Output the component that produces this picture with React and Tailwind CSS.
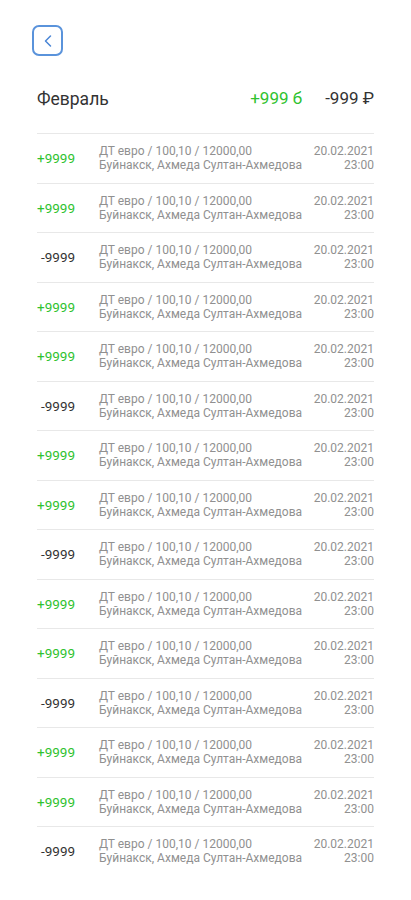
import { ChevronLeft } from "lucide-react";

const rows = [
  "+", "+", "-", "+", "+", "-", "+", "+", "-", "+", "+", "-", "+", "+", "-",
];

const Row = ({ sign }) => {
  const plus = sign === "+";
  return (
    <div className="flex items-center h-[49.5px] border-t border-[#e8e8e8]">
      <div className={`w-[62px] text-[13.5px] ${plus ? "text-[#2fc22f]" : "text-[#333] pl-[4px]"}`}>
        {plus ? "+9999" : "-9999"}
      </div>
      <div className="flex-1 text-[12px] leading-[14px] text-[#909090]">
        <div>ДТ евро / 100,10 / 12000,00</div>
        <div>Буйнакск, Ахмеда Султан-Ахмедова</div>
      </div>
      <div className="text-right text-[12px] leading-[14px] text-[#909090]">
        <div>20.02.2021</div>
        <div>23:00</div>
      </div>
    </div>
  );
};

export default function App() {
  return (
    <div className="min-h-[900px] w-[411px] bg-white pt-[25px] font-['Roboto',sans-serif]">
      <button className="ml-[32px] w-[31px] h-[31px] rounded-[7px] border-2 border-[#5a93db] flex items-center justify-center text-[#4a86d6]">
        <ChevronLeft size={20} strokeWidth={1.8} />
      </button>

      <div className="px-[37px]">
        <div className="flex items-center mt-[31px] mb-[22px] h-[24px] text-[17px]">
          <div className="flex-1 text-[17.5px] text-[#333]">Февраль</div>
          <div className="text-[#2fc22f] mr-[2px]">+999 б</div>
          <div className="ml-[21px] text-[#333]">-999 ₽</div>
        </div>

        {/* operations */}
        <div>
          {rows.map((s, i) => (
            <Row key={i} sign={s} />
          ))}
        </div>
      </div>
    </div>
  );
}
